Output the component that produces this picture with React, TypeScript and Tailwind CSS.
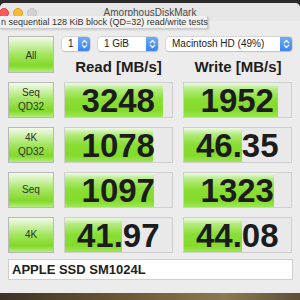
import React from 'react';

const rows = [
  { label: ['Seq', 'QD32'], read: '3248', rw: 98, write: '1952', ww: 94 },
  { label: ['4K', 'QD32'], read: '1078', rw: 88, write: '46.35', ww: 58 },
  { label: ['Seq'], read: '1097', rw: 89, write: '1323', ww: 90 },
  { label: ['4K'], read: '41.97', rw: 57, write: '44.08', ww: 58 },
];

const btn =
  'flex flex-col items-center justify-center w-[46px] shrink-0 border border-[#b9b9b9] bg-[linear-gradient(180deg,#f3fbec_0%,#d6f3b8_18%,#a2e65e_50%,#82d828_82%,#b4ed7e_100%)] text-[10px] leading-[14px] text-[#2f3328]';

const Stepper = () => (
  <div className="w-[12px] h-full rounded-r-[3px] bg-[linear-gradient(180deg,#6eacf9_0%,#3a84f2_100%)] flex items-center justify-center">
    <svg width="7" height="10" viewBox="0 0 7 10" fill="none" stroke="white" strokeWidth="1.2" strokeLinecap="round" strokeLinejoin="round">
      <path d="M1.2 3.8 L3.5 1.5 L5.8 3.8" />
      <path d="M1.2 6.2 L3.5 8.5 L5.8 6.2" />
    </svg>
  </div>
);

const Select = ({ text, w }: { text: string; w: string }) => (
  <div className={`${w} h-[14px] flex bg-white rounded-[3px] shadow-[0_0_0_0.5px_#c4c4c4,0_0.5px_1px_#bdbdbd]`}>
    <div className="flex-1 pl-[6px] text-[10px] leading-[14px] text-[#222]">{text}</div>
    <Stepper />
  </div>
);

const Cell = ({ value, width, w }: { value: string; width: number; w: string }) => (
  <div
    className={`${w} h-full border border-[#cfcfcf] bg-[#e9e9e9] bg-no-repeat bg-[linear-gradient(180deg,#eef9e4_0%,#b4eb80_18%,#8ade34_48%,#84db2b_80%,#9ce656_100%)] flex items-center justify-center text-[33px] font-bold leading-none text-[#1c1c1c]`}
    style={{ backgroundSize: `${width}px 100%` }}
  >
    {value}
  </div>
);

export default function App() {
  return (
    <div className="w-[300px] h-[300px] overflow-hidden relative bg-[#2b2b2b] flex flex-col font-['Liberation_Sans',Arial,sans-serif]">
      <div className="h-[3px] shrink-0" />
      <div className="flex-1 flex flex-col bg-[#ececec] rounded-t-[5px]">
        <div className="h-[18px] relative bg-[#e6e6e6] rounded-t-[5px]">
          <div className="flex gap-[4px] pt-[5px] -ml-[1px]">
            <div className="w-[10px] h-[10px] rounded-full bg-[#fc5e57] border border-[#e0443e]" />
            <div className="w-[10px] h-[10px] rounded-full bg-[#fdbc2e] border border-[#dea123]" />
            <div className="w-[10px] h-[10px] rounded-full bg-[#d3d3d3] border border-[#c2c2c2]" />
          </div>
          <div className="absolute inset-x-0 top-[4px] text-center text-[10px] leading-[12px] text-[#4a4a4a]">
            AmorphousDiskMark
          </div>
        </div>
        <div className="flex flex-col px-[8px] pt-[15px]">
          <div className="flex h-[37px] gap-[10px]">
            <div className={`${btn} h-[37px] pt-[3px]`}>All</div>
            <div className="flex flex-col w-[229px]">
              <div className="flex gap-[8px] mt-[1px] -ml-[2px]">
                <Select text="1" w="w-[28px]" />
                <Select text="1 GiB" w="w-[60px]" />
                <Select text="Macintosh HD (49%)" w="w-[126px]" />
              </div>
              <div className="grid grid-cols-[109px_110px] gap-x-[10px] mt-[7px] text-[15px] font-bold leading-[18px] text-[#1c1c1c] text-center">
                <div>Read [MB/s]</div>
                <div>Write [MB/s]</div>
              </div>
            </div>
          </div>
          <div className="flex flex-col gap-[9px] mt-[9px]">
            {rows.map((r, i) => (
              <div key={i} className="flex gap-[10px] h-[36px]">
                <div className={`${btn} h-full`}>
                  {r.label.map((l) => (
                    <span key={l}>{l}</span>
                  ))}
                </div>
                <Cell value={r.read} width={r.rw} w="w-[109px]" />
                <Cell value={r.write} width={r.ww} w="w-[110px]" />
              </div>
            ))}
          </div>
          <div className="mt-[6px] h-[21px] w-[285px] bg-white border border-[#cfcfcf] pl-[3px] text-[13px] font-bold leading-[19px] text-[#222]">
            APPLE SSD SM1024L
          </div>
        </div>
      </div>
      <div className="h-[7px] shrink-0 bg-[linear-gradient(90deg,#3e3226_0%,#6a5638_40%,#8a7a52_75%,#5e503a_100%)]" />
      <div className="absolute left-0 top-[16px] w-[208px] h-[13px] bg-[#f1f1f1] border-r border-b border-[#c9c9c9] shadow-[1px_1px_2px_rgba(0,0,0,0.15)] pl-[1px] text-[9px] leading-[12px] text-[#333] whitespace-nowrap">
        n sequential 128 KiB block (QD=32) read/write tests
      </div>
    </div>
  );
}
